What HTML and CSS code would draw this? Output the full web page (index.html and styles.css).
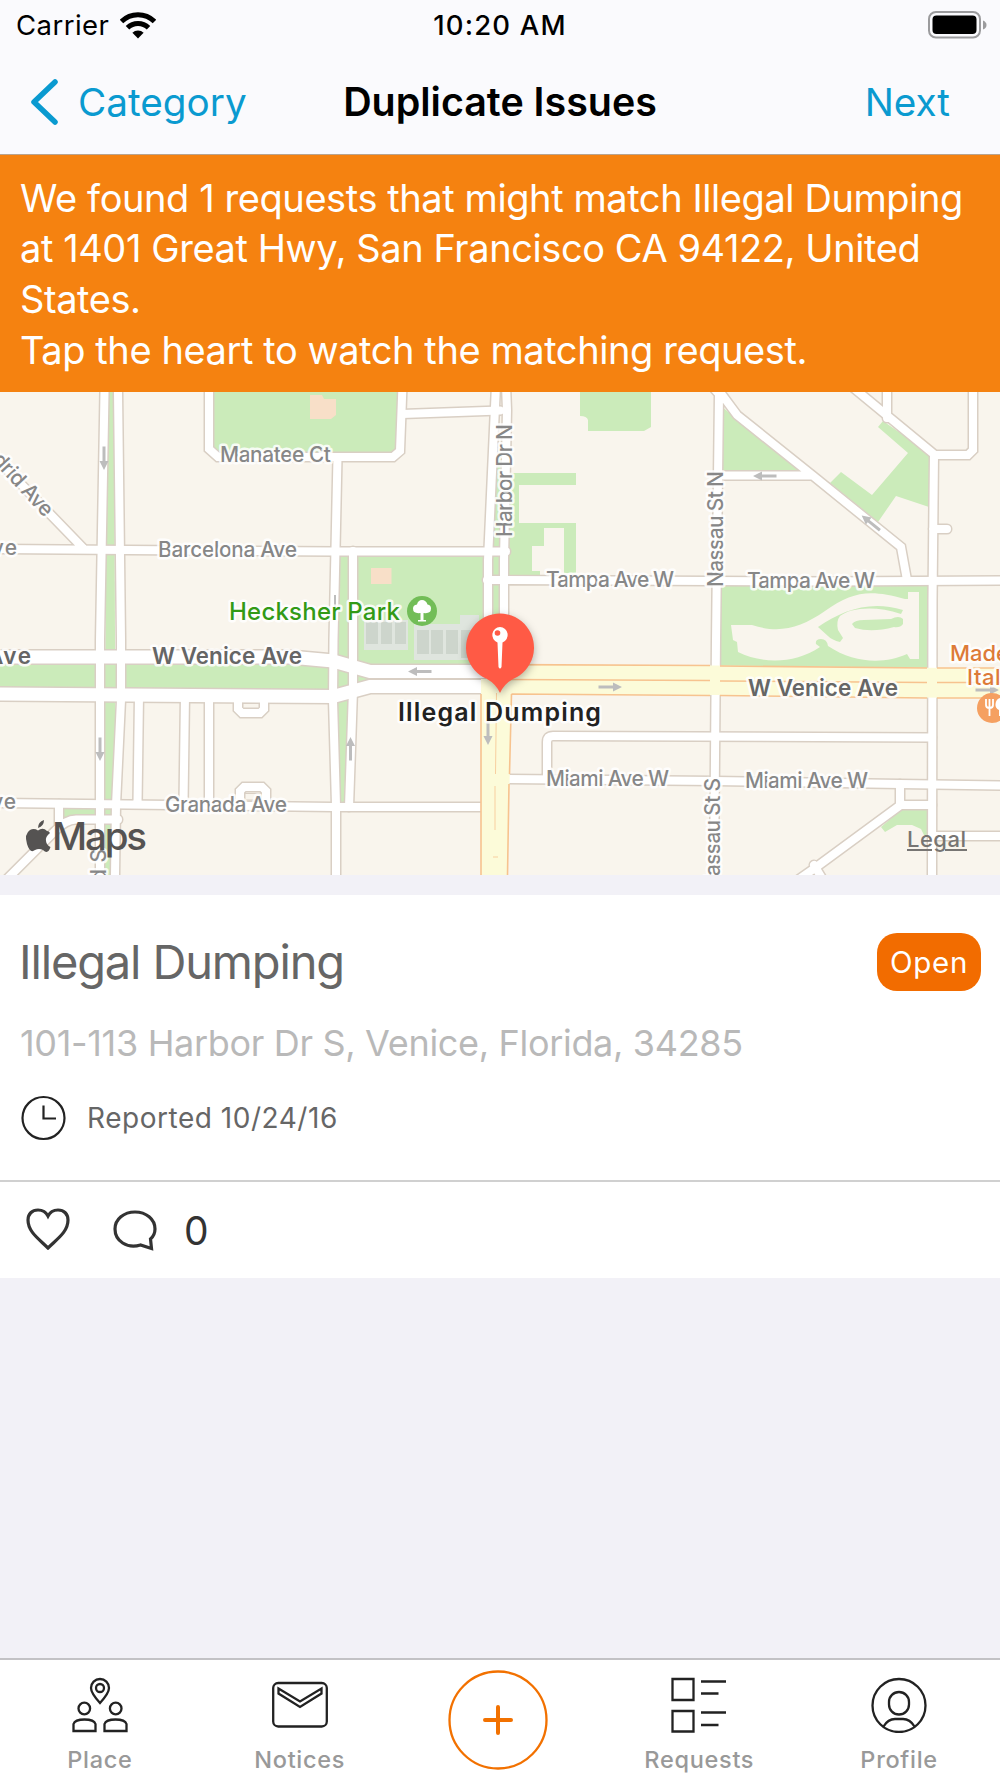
FILE: index.html
```html
<!DOCTYPE html>
<html lang="en">
<head>
  <meta charset="UTF-8" />
  <meta name="viewport" content="width=device-width, initial-scale=1.0" />
  <title>Duplicate Issues</title>
  <link rel="stylesheet" href="styles.css">
</head>
<body>
  <header>
    <div class="status-bar">
      <div class="carrier">
        <span>Carrier</span>
        <svg width="36" height="27" viewBox="0 0 36 27">
          <path d="M1.500 9.500a23.500 23.500 0 0 1 33 0" fill="none" stroke="#000" stroke-width="5" />
          <path d="M7.500 15.800a15 15 0 0 1 21 0" fill="none" stroke="#000" stroke-width="5" />
          <path d="M18 26.500l-5.600-5.800a8 8 0 0 1 11.200 0z" />
        </svg>
      </div>
      <div class="clock">10:20 AM</div>
      <div class="battery">
        <svg width="60" height="28" viewBox="0 0 60 28">
          <rect x="1" y="1" width="51" height="25.500" rx="7" fill="none" stroke="#9b9b9d" stroke-width="2" />
          <rect x="4.500" y="4.500" width="44" height="18.500" rx="4" />
          <path d="M55 9.500q3.500 1.500 3.500 4.500t-3.500 4.500z" fill="#9b9b9d" />
        </svg>
      </div>
    </div>
    <nav class="nav-bar">
      <a class="back">
        <svg width="28" height="46" viewBox="0 0 28 46"><path d="M25 3L4 23l21 20" fill="none" stroke="#0a9ad0" stroke-width="5.500" stroke-linecap="round" stroke-linejoin="round" /></svg>
        <span>Category</span>
      </a>
      <h1>Duplicate Issues</h1>
      <a class="next">Next</a>
    </nav>
  </header>

  <div class="banner">
    <p>We found 1 requests that might match Illegal Dumping<br>at 1401 Great Hwy, San Francisco CA 94122, United<br>States.</p>
    <p>Tap the heart to watch the matching request.</p>
  </div>

  <svg class="map" viewBox="0 392 1000 483">
    <defs>
      <g id="streets">
        <path d="M104.500 392L100 640V875M118 392L121 640V700L116 805L115 875" />
        <path d="M-10 452L83 548M-10 549L335 551.500H506" />
        <path d="M209 392V449L218 457H393L400 451L402.500 385M337.500 457L333.500 640L333 700L336 805V875" />
        <path d="M353 551V690L349 807M402 414L500 410.500" />
        <path d="M496 385L488 560V672M506 385L507 410L504 560V672M487 580L830 581.500L1000 580.500" />
        <path d="M710 384L719 394L716 640L714 875M717 388L737 415L812 475L901 547L907 580M719 475.500H812" />
        <path d="M850 385L935 455H968L973 450V385M887 385V418M934 455L932.500 600L932 875M933 529H947" />
        <path d="M139 695L137.500 804M185 695L183.500 804M209 695V804M-5 803L333 807H481" />
        <path d="M238 696V709L242 713H260L264 709V696M240 806V791L244 787H262L266 791V806" />
        <path d="M59 804V826M5 881L55 831Q66 819.500 76 819.500H118" />
        <path d="M547 779V742Q547 736 553 736L932 737.500M508 779L715 781L900 784L1005 785.500" />
        <path d="M900 784V805H932M902 804L815 868L795 882M814 865L826 885M932 836H1005" />
      </g>
      <g id="avenue">
        <path d="M-5 657H290L333 661L370 671.500H486" />
        <path d="M-5 694L333 696.500L370 686.500H486" />
      </g>
      <path id="arrow" d="M-11.500-1.500H3V-4.500L12 0L3 4.500V1.500H-11.500z" fill="#bdbdbd" />
    </defs>

    <rect y="392" width="1000" height="483" fill="#f9f5ed" />

    <!-- parks -->
    <g fill="#cbebba">
      <path d="M107 392H114L116 875H104z" />
      <path d="M209 392H402L398 457H218L209 449z" />
      <path d="M580 392H651V427L644 431H588V420Q587 416 580 416z" />
      <path d="M-5 657H290L333 661V696H-5zM336 556H349V690L344 802H341L336 700zM357 674L372 678.500L357 683z" />
      <path d="M353 551H488V672H370L353 661zM493 450H501V672H491z" />
      <path d="M508 473H576V485H519V523H576V573H564V528H544V546H532V571H540V577H506z" />
      <path d="M721 406L803 473H721zM878 427L883 421L932 455V508L896 496L878 522L830 483L841 472L872 495L908 453z" />
      <path d="M716 585H932V668H716z" />
      <path d="M63 806H98V815H76L64 821zM881 827L903 808H932V838L924 835L921 829L912 825H897L885 832z" />
    </g>
    <path d="M731 625H752C780 634 800 628 825 611C853 591 870 589 905 599H908V592H919V659H910L907 654C885 664 855 664 828 646Q827 639 821 639T816 644L820 647C795 664 762 664 738 652L737 642L733 640z" fill="#f9f5ed" />
    <g fill="#cbebba">
      <path d="M818 627C843 610 870 600 903 610L901 614C875 605 850 608 840 616Q836 621 838 630L843 638L840 642Q832 640 828 636z" />
      <path d="M852 624Q855 620 864 620L891 619Q899 615 903 619V624Q900 628 894 627Q872 633 855 628z" />
    </g>
    <path d="M310 395H322L324 399H336V415L331 419H310zM371 568H391.500V584H371z" fill="#f8dfc8" />
    <path d="M364 620H408V650H364zM414 624H460V615H479V660H414z" fill="#dfe5de" />
    <path d="M366 622H378V644H366zM381 622H392V644H381zM395 622H406V644H395zM417 630H429V654H417zM431 630H443V654H431zM446 630H458V654H446zM461 630H479V658H461z" fill="#cdd5cc" />

    <use href="#streets" class="casing" />
    <use href="#avenue" class="avenue-casing" />
    <use href="#streets" class="road" />
    <use href="#avenue" class="avenue-road" />
    <path d="M243 703.500H259V708H243zM245 793.500H261V800H245z" fill="#f9f5ed" stroke="#d9cfc4" />

    <!-- main yellow road -->
    <path d="M481 679H486V664.500L715 665.500L1000 668.500V698.500L715 695L511.500 694L507.500 875H481z" fill="#fcfbd9" />
    <path d="M481 694V875M511.500 694L509.500 774M509 784L507.500 875M511.500 694L710 695.500M720 695.500L927 698M937 698H1000M486 664.500L710 665.500M720 666L927 668M937 668H1000M500 679.500L710 680.500M720 681L927 682.500M937 682.500H1000" fill="none" stroke="#f7c38f" stroke-width="1.600" />
    <path d="M496.500 693L495.500 774M495 786V830M493 857H498" fill="none" stroke="#f8cf9f" />

    <use href="#arrow" transform="translate(104 458) rotate(90)" />
    <use href="#arrow" transform="translate(100 749) rotate(90)" />
    <use href="#arrow" transform="translate(488 733) rotate(90)" />
    <use href="#arrow" transform="translate(350.500 749) rotate(-90)" />
    <use href="#arrow" transform="translate(420 671.500) rotate(180)" />
    <use href="#arrow" transform="translate(610 687)" />
    <use href="#arrow" transform="translate(765 476) rotate(180)" />
    <use href="#arrow" transform="translate(871 523) rotate(219)" />
    <use href="#arrow" transform="translate(987 690)" />
    <path d="M335 595V607" stroke="#bdbdbd" stroke-width="2" />

    <g class="street-name">
      <text x="220" y="462" textLength="111">Manatee Ct</text>
      <text x="158" y="556.500" textLength="139">Barcelona Ave</text>
      <text x="-23" y="554.500" textLength="40">Ave</text>
      <text x="546" y="587" textLength="128">Tampa Ave W</text>
      <text x="747" y="588" textLength="128">Tampa Ave W</text>
      <text x="546" y="785.500" textLength="123">Miami Ave W</text>
      <text x="745" y="788" textLength="123">Miami Ave W</text>
      <text x="165" y="812" textLength="122">Granada Ave</text>
      <text x="-23" y="809" textLength="39">Ave</text>
      <text transform="translate(512 537) rotate(-90)" textLength="113">Harbor Dr N</text>
      <text transform="translate(722.500 587) rotate(-90)" textLength="116">Nassau St N</text>
      <text transform="translate(720 891) rotate(-90)" textLength="113">Nassau St S</text>
      <text transform="translate(106 890) rotate(-90)" textLength="41">rd S</text>
      <text transform="translate(-29 439) rotate(47)" textLength="108">Madrid Ave</text>
    </g>
    <g class="avenue-name">
      <text x="152" y="664" textLength="150">W Venice Ave</text>
      <text x="748" y="695.500" textLength="150">W Venice Ave</text>
      <text x="-13" y="663.500" textLength="44">Ave</text>
    </g>
    <text class="park-name" x="229" y="620" textLength="171">Hecksher Park</text>
    <circle cx="422" cy="611" r="15" fill="#72bd57" />
    <path d="M420.500 620V613Q413 614 413 608.500Q413 605 417 604.500Q418 600 422 600T427.500 604.500Q431 605 431 608.500Q431 614 423.500 613V620H426V621.500H418V620z" fill="#fff" />

    <g class="shop-name">
      <text x="950" y="661" textLength="59">Made</text>
      <text x="967" y="685" textLength="47">Italy</text>
    </g>
    <circle cx="992" cy="708" r="15" fill="#f5a061" />
    <path d="M986 699V705Q986 708 989.500 708T993 705V699M989.500 699V716" fill="none" stroke="#fff" stroke-width="1.800" />
    <path d="M999 716V710Q995 708 995.500 704Q996 699 1000 698V716z" fill="#fff" />

    <path class="pin" d="M500 693Q496 684 487 679A34 34 0 1 1 513 679Q504 684 500 693z" />
    <path d="M500 627A8 8 0 0 1 502.500 642.500L501.500 667Q500 670 498.500 667L497.500 642.500A8 8 0 0 1 500 627z" fill="#fff" />
    <circle cx="497.500" cy="633" r="2.800" fill="#ff5a45" />
    <text class="pin-name" x="398" y="721" textLength="203">Illegal Dumping</text>

    <g class="attribution">
      <path d="M47 831Q49 831 50 833Q45 837 46 841Q46.500 845 50.500 847Q48 855 43 850Q39 848 35 850Q30 854 27 844Q24 834 30 830Q34 828 38 830.500Q43 827 47 831zM38 828Q38 822 44 820Q44 826 38 828z" />
      <text class="maps" x="52" y="850" textLength="95">Maps</text>
      <text class="legal" x="907" y="847" textLength="59">Legal</text>
      <path d="M907 850H932M945 850H967" stroke="#777573" stroke-width="2" />
    </g>
  </svg>

  <section class="card">
    <div class="card-body">
      <div class="card-head">
        <h2>Illegal Dumping</h2>
        <span class="badge">Open</span>
      </div>
      <p class="address">101-113 Harbor Dr S, Venice, Florida, 34285</p>
      <div class="reported">
        <svg width="46" height="46" viewBox="0 0 46 46" fill="none" stroke="#222" stroke-width="2.200">
          <circle cx="23.500" cy="23" r="21" />
          <path d="M23.500 10.500V23.500H36" />
        </svg>
        <span>Reported 10/24/16</span>
      </div>
    </div>
    <div class="card-actions">
      <svg class="heart" width="44" height="42" viewBox="0 0 44 42"><path d="M22 40C13 31 2 24 2 12C2 6 6 2 12 2Q19 2 22 8Q25 2 32 2C38 2 42 6 42 12C42 24 31 31 22 40z" fill="none" stroke="#333" stroke-width="3.200" /></svg>
      <svg class="comment" width="44" height="42" viewBox="0 0 44 42"><path d="M38.500 38.500L27.500 35C14 39 2 31 2 19C2 9 11 2 22 2S42 9 42 19Q42 25 37.500 29z" fill="none" stroke="#333" stroke-width="3.200" /></svg>
      <span>0</span>
    </div>
  </section>

  <footer class="tab-bar">
    <a class="tab">
      <svg width="56" height="56" viewBox="0 0 56 56">
        <path d="M28 26Q19 16 19 11A9 9 0 0 1 37 11Q37 16 28 26z" />
        <circle cx="28" cy="11" r="4" />
        <circle cx="12.300" cy="31.500" r="5.800" />
        <circle cx="43.700" cy="31.500" r="5.800" />
        <path d="M1.500 54V47Q3 42.500 12.500 42.500T23.500 47V54zM32.500 54V47Q34 42.500 43.500 42.500T54.500 47V54z" />
      </svg>
      <span>Place</span>
    </a>
    <a class="tab">
      <svg width="56" height="56" viewBox="0 0 56 56">
        <rect x="1.200" y="6" width="53.600" height="43.500" rx="5" />
        <path d="M6.500 11.500L28 24.500L49.500 11.500V16.500L28 30L6.500 16.500z" />
      </svg>
      <span>Notices</span>
    </a>
    <a class="tab tab-add">
      <svg width="100" height="100" viewBox="0 0 100 100">
        <circle cx="50" cy="50" r="48.500" />
        <path d="M50 37V63M37 50H63" stroke-width="4" stroke-linecap="round" />
      </svg>
    </a>
    <a class="tab">
      <svg width="56" height="56" viewBox="0 0 56 56">
        <path d="M1.500 2H22.500V23H1.500zM1.500 34H22.500V54.500H1.500zM30 4.500H55M30 16.500H47.500M30 35.500H55M30 48H47.500" />
      </svg>
      <span>Requests</span>
    </a>
    <a class="tab">
      <svg width="56" height="56" viewBox="0 0 56 56">
        <circle cx="28" cy="28.500" r="26.500" />
        <rect x="18" y="15" width="20" height="22.500" rx="10" />
        <path d="M12.500 49.500Q17 42 24 42H32Q39 42 43.500 49.500" />
      </svg>
      <span>Profile</span>
    </a>
  </footer>
</body>
</html>
```
FILE: styles.css
```css
* {
  box-sizing: border-box;
}
body {
  font-family: Inter, "Liberation Sans", sans-serif;
  margin: 0;
  width: 1000px;
  height: 1778px;
  background: #f2f1f7;
  display: flex;
  flex-direction: column;
  overflow: hidden;
}
h1, h2, p {
  margin: 0;
  font-weight: 400;
}
header {
  height: 155px;
  background: #fafafd;
  border-bottom: 1px solid #b9a48f;
}
.status-bar {
  display: grid;
  grid-template-columns: 1fr 1fr 1fr;
  height: 50px;
  align-items: center;
  padding: 0 12px 0 16px;
  font-size: 27.5px;
  letter-spacing: 0.45px;
}
.carrier {
  display: flex;
  align-items: center;
  gap: 11px;
}
.clock {
  text-align: center;
  font-weight: 500;
  letter-spacing: 1.2px;
  margin-left: -4px;
}
.battery svg {
  display: block;
  margin-left: auto;
}
.nav-bar {
  display: grid;
  grid-template-columns: 1fr auto 1fr;
  height: 104px;
  align-items: center;
  padding: 0 30px;
  font-size: 38.7px;
  color: #0a9ad0;
}
.back {
  display: flex;
  align-items: center;
  gap: 20px;
}
.nav-bar h1 {
  font-size: 39.4px;
  font-weight: 600;
  color: #000;
}
.next {
  text-align: right;
  padding-right: 20px;
}
.banner {
  height: 237px;
  background: #f58210;
  color: #fff;
  padding: 17.5px 20px;
  font-size: 38px;
  letter-spacing: -0.42px;
  line-height: 50.7px;
  white-space: nowrap;
}
.map {
  display: block;
  width: 1000px;
  height: 483px;
  flex: none;
}
.casing, .avenue-casing, .road, .avenue-road {
  fill: none;
  stroke: #d9cfc4;
  stroke-width: 11px;
  stroke-linecap: round;
}
.road {
  stroke: #fff;
  stroke-width: 8px;
}
.avenue-casing {
  stroke-width: 16px;
  stroke-linecap: butt;
}
.avenue-road {
  stroke: #fff;
  stroke-width: 13px;
  stroke-linecap: butt;
}
.map text {
  paint-order: stroke;
  stroke: rgba(255, 255, 255, 0.85);
  stroke-width: 5px;
  stroke-linejoin: round;
}
.street-name {
  font-size: 21px;
  font-weight: 500;
  fill: #878787;
}
.avenue-name {
  font-size: 22.5px;
  font-weight: 600;
  fill: #666;
}
.park-name {
  font-size: 24px;
  font-weight: 500;
  fill: #329a16;
}
.shop-name {
  font-size: 22px;
  font-weight: 500;
  fill: #dd7b38;
}
.pin {
  fill: #ff5a45;
  filter: drop-shadow(0 3px 4px rgba(0, 0, 0, 0.3));
}
.pin-name {
  font-size: 25px;
  font-weight: 600;
  fill: #222;
}
.attribution {
  fill: #555352;
}
.map .maps, .map .legal {
  stroke: none;
}
.maps {
  font-size: 38.5px;
  font-weight: 500;
}
.legal {
  font-size: 22px;
  font-weight: 500;
  fill: #777573;
}
.card {
  margin-top: 20px;
  background: #fff;
  height: 383px;
}
.card-body {
  height: 287px;
  padding: 37px 19px 0 20px;
  border-bottom: 2px solid #d0d0d0;
}
.card-head {
  display: flex;
  justify-content: space-between;
  align-items: center;
  height: 60px;
}
.card-head h2 {
  font-size: 47px;
  letter-spacing: -1.15px;
  color: #666;
  margin-left: -1px;
  padding-bottom: 2px;
}
.badge {
  width: 104px;
  height: 58px;
  line-height: 59px;
  border-radius: 20px;
  background: #f26c00;
  color: #fff;
  font-size: 29.5px;
  letter-spacing: 0.7px;
  text-align: center;
}
.address {
  margin-top: 29px;
  font-size: 36px;
  letter-spacing: -0.32px;
  line-height: 44px;
  color: #b9b9b9;
}
.reported {
  display: flex;
  align-items: center;
  gap: 21px;
  margin-top: 30px;
  font-size: 28px;
  letter-spacing: 0.53px;
  color: #666;
}
.card-actions {
  display: flex;
  align-items: center;
  height: 96px;
  padding-left: 26px;
  font-size: 39px;
  color: #333;
}
.heart {
  margin-bottom: 3px;
}
.comment {
  margin: 2px 27px 0 43px;
}
.tab-bar {
  margin-top: auto;
  height: 120px;
  background: #fff;
  border-top: 2px solid #c3c2c5;
  display: grid;
  grid-template-columns: repeat(5, 1fr);
  padding-right: 1px;
}
.tab {
  display: flex;
  flex-direction: column;
  align-items: center;
  padding-top: 17px;
  font-size: 23.5px;
  font-weight: 500;
  letter-spacing: 0.7px;
  line-height: 30px;
  color: #999;
}
.tab span {
  margin-top: 12px;
}
.tab svg {
  fill: none;
  stroke: #222;
  stroke-width: 2.300px;
}
.tab-add {
  padding: 10px 2px 0 0;
}
.tab-add svg {
  stroke: #f27100;
}
```
